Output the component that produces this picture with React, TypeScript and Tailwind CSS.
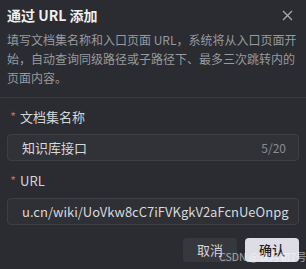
import React from "react";

const App: React.FC = () => {
  return (
    <div
      className="relative w-[306px] h-[269px] overflow-hidden bg-[#2a2c31] text-[#d4d5d8]"
      style={{ fontFamily: '"Noto Sans CJK SC", "Noto Sans", sans-serif' }}
    >
      {/* 标题栏 */}
      <div className="flex h-[30px] items-center justify-between pl-[7px] pr-[13px]">
        <span className="text-[14px] font-bold text-[#eeeeef]">通过 URL 添加</span>
        <svg width="11" height="11" viewBox="0 0 11 11" className="text-[#a8aaae]">
          <path d="M1 1L10 10M10 1L1 10" stroke="currentColor" strokeWidth="1.3" />
        </svg>
      </div>

      <p className="px-[7px] text-[12px] leading-[19px] text-[#989a9f]">
        填写文档集名称和入口页面 URL，系统将从入口页面开始，自动查询同级路径或子路径下、最多三次跳转内的页面内容。
      </p>

      <div className="mt-[10px] h-px bg-[#37393e]" />

      <div className="px-[7px]">
        <div className="mt-[9px] flex h-[20px] items-center pl-[3px] text-[13px]">
          <span className="mr-[4px] text-[#e5534b]">*</span>
          <span>文档集名称</span>
        </div>
        <div className="mt-[7px] flex h-[27px] items-center justify-between rounded-[4px] border border-[#3d3f44] bg-[#303237] pl-[14px] pr-[12px]">
          <span className="text-[13px] text-[#d8d9dc]">知识库接口</span>
          <span className="text-[12px] text-[#8a8c91]">5/20</span>
        </div>

        <div className="mt-[10px] flex h-[20px] items-center pl-[3px] text-[13px]">
          <span className="mr-[4px] text-[#e5534b]">*</span>
          <span>URL</span>
        </div>
        <div className="mt-[7px] flex h-[27px] items-center overflow-hidden whitespace-nowrap rounded-[4px] border border-[#3d3f44] bg-[#2e3035] pl-[14px] pr-[12px]">
          <span className="text-[13px] text-[#d8d9dc]">u.cn/wiki/UoVkw8cC7iFVKgkV2aFcnUeOnpg</span>
        </div>

        <div className="mt-[13px] flex justify-end gap-[8px]">
          <button className="h-[24px] w-[54px] rounded-[4px] bg-[#36383d] text-[13px] text-[#d4d5d8]">
            取消
          </button>
          <button className="h-[24px] w-[54px] rounded-[4px] bg-[#dddee5] text-[13px] font-medium text-[#1f2024]">
            确认
          </button>
        </div>
      </div>

      {/* 水印 */}
      <span className="absolute left-[219px] top-[250px] whitespace-nowrap text-[10.5px] leading-[14px] text-white/55">
        CSDN @玖月初7号
      </span>
    </div>
  );
};

export default App;
